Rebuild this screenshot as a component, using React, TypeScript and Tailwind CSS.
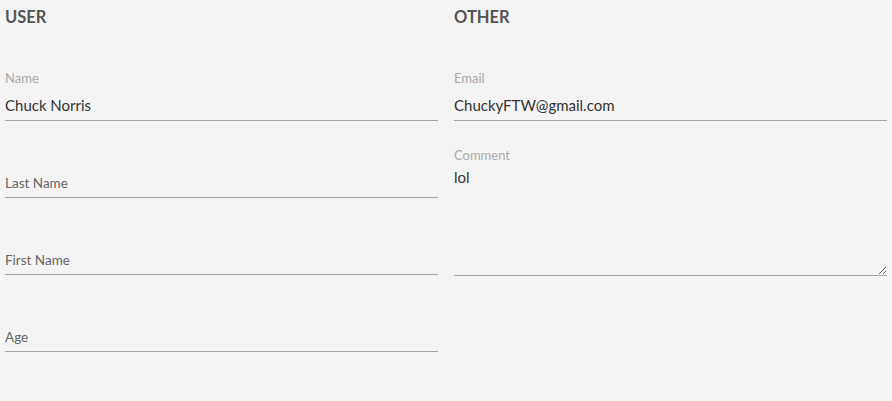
import React from "react";

interface IField {
  label: string;
  value?: string;
}

function Field({ label, value }: IField) {
  if (value) {
    return (
      <div className="h-[77px] flex flex-col justify-end">
        <label className="text-[13px] leading-[16px] text-[#aaa]">{label}</label>
        <input
          className="mt-[4px] h-[31px] w-full bg-transparent border-b border-[#a6a6a6] text-[15px] text-[#333] outline-none"
          defaultValue={value}
        />
      </div>
    );
  }
  return (
    <div className="h-[77px] flex flex-col justify-end">
      <input
        className="h-[31px] pt-[2px] w-full bg-transparent border-b border-[#a6a6a6] text-[13.5px] text-[#333] outline-none placeholder:text-[#666]"
        placeholder={label}
      />
    </div>
  );
}

function App() {
  return (
    <div className="h-[401px] bg-[#f4f4f4] px-[5px] font-['Lato',sans-serif]">
      <div className="grid grid-cols-2 gap-4">
        <div>
          <h2 className="h-[44px] pt-[7px] text-[16.5px] leading-[20px] font-bold text-[#555]">USER</h2>
          <Field label="Name" value="Chuck Norris" />
          <Field label="Last Name" />
          <Field label="First Name" />
          <Field label="Age" />
        </div>
        <div>
          <h2 className="h-[44px] pt-[7px] text-[16.5px] leading-[20px] font-bold text-[#555]">OTHER</h2>
          <Field label="Email" value="ChuckyFTW@gmail.com" />
          <div className="flex flex-col pt-[26px]">
            <label className="text-[13px] leading-[16px] text-[#aaa]">Comment</label>
            <textarea
              className="mt-[3px] h-[110px] w-full bg-transparent border-b border-[#a6a6a6] text-[15px] leading-[22px] text-[#333] outline-none"
              defaultValue="lol"
            />
          </div>
        </div>
      </div>
    </div>
  );
}

export default App;
